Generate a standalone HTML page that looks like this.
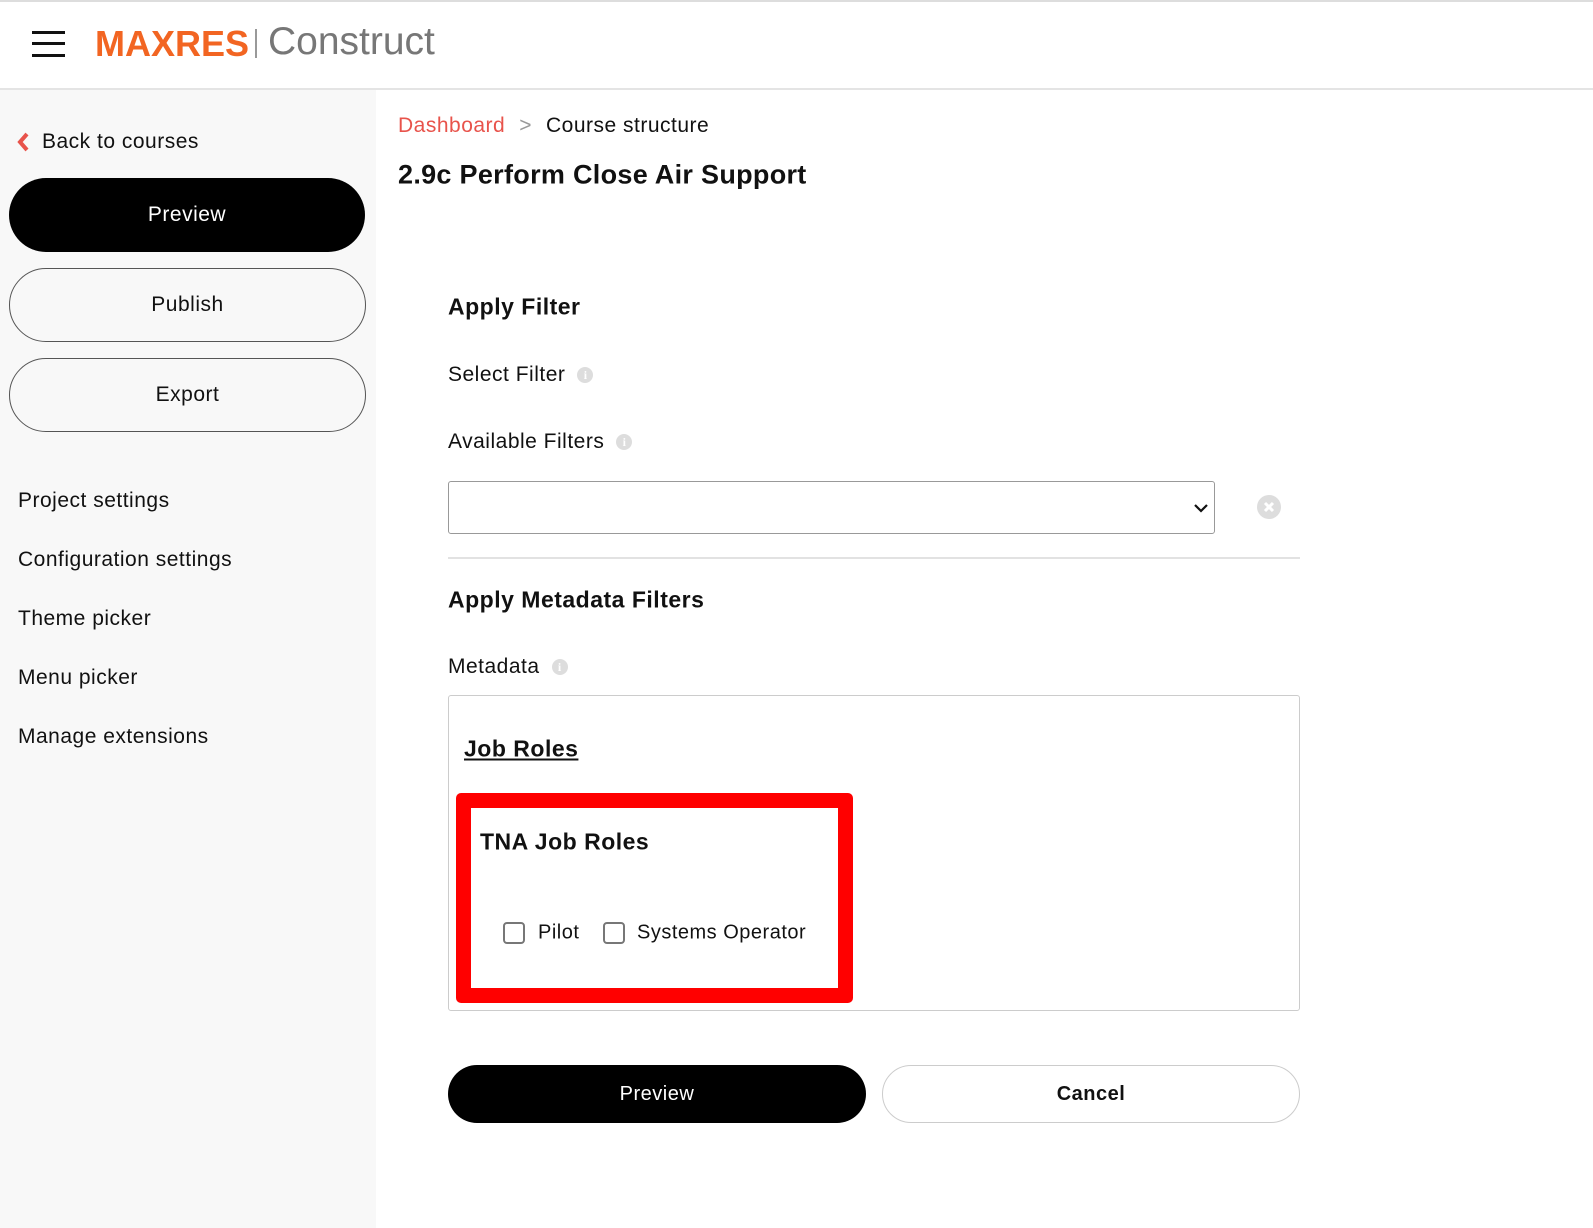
<!DOCTYPE html>
<html><head><style>
*{margin:0;padding:0;box-sizing:border-box}
body{width:1593px;height:1228px;position:relative;background:#fff;font-family:"Liberation Sans",sans-serif;color:#111;overflow:hidden;letter-spacing:0.5px}
.a{position:absolute;white-space:nowrap}
.side{position:absolute;left:0;top:90px;width:376px;height:1138px;background:#f8f8f8}
.btn{position:absolute;border-radius:40px;display:flex;align-items:center;justify-content:center;font-size:21px}
.lbl{font-size:21px;transform:translateY(-50%)}
.info{display:inline-block;width:16px;height:16px;border-radius:50%;background:#ddd;color:#fff;font-size:12px;font-weight:bold;text-align:center;line-height:16px;margin-left:12px;vertical-align:2px;font-family:"Liberation Serif",serif;letter-spacing:0}
.cb{position:absolute;width:22px;height:22px;border:2px solid #777;border-radius:4px;background:#fff}
</style></head><body>
<div class="a" style="left:0;top:0;width:1593px;height:2px;background:#ddd"></div>
<div class="a" style="left:0;top:88px;width:1593px;height:2px;background:#e4e4e4"></div>
<div class="a" style="left:32px;top:31px;width:33px;height:3px;background:#111"></div>
<div class="a" style="left:32px;top:42px;width:33px;height:3px;background:#111"></div>
<div class="a" style="left:32px;top:54px;width:33px;height:3px;background:#111"></div>
<div class="a" style="left:95px;top:23px;font-size:36px;font-weight:bold;color:#f26522;letter-spacing:0">MAXRES</div>
<div class="a" style="left:255px;top:29px;width:2px;height:29px;background:#999"></div>
<div class="a" style="left:268px;top:20px;font-size:39px;color:#777;letter-spacing:0">Construct</div>
<div class="side"></div>
<svg class="a" style="left:16px;top:132px" width="14" height="20"><path d="M11 2 L4 10 L11 18" stroke="#e8534b" stroke-width="4" fill="none"/></svg>
<div class="a lbl" style="left:42px;top:142px">Back to courses</div>
<div class="btn" style="left:9px;top:178px;width:356px;height:74px;background:#000;color:#fff">Preview</div>
<div class="btn" style="left:9px;top:268px;width:357px;height:74px;border:1.5px solid #555">Publish</div>
<div class="btn" style="left:9px;top:358px;width:357px;height:74px;border:1.5px solid #555">Export</div>
<div class="a lbl" style="left:18px;top:501px">Project settings</div>
<div class="a lbl" style="left:18px;top:560px">Configuration settings</div>
<div class="a lbl" style="left:18px;top:619px">Theme picker</div>
<div class="a lbl" style="left:18px;top:678px">Menu picker</div>
<div class="a lbl" style="left:18px;top:737px">Manage extensions</div>
<div class="a lbl" style="left:398px;top:126px"><span style="color:#e8534b">Dashboard</span><span style="color:#999;margin:0 14px">&gt;</span>Course structure</div>
<div class="a lbl" style="left:398px;top:175px;font-size:27px;font-weight:bold;letter-spacing:0.3px">2.9c Perform Close Air Support</div>
<div class="a lbl" style="left:448px;top:307px;font-size:23px;font-weight:bold">Apply Filter</div>
<div class="a lbl" style="left:448px;top:375px">Select Filter<span class="info">i</span></div>
<div class="a lbl" style="left:448px;top:442px">Available Filters<span class="info">i</span></div>
<div class="a" style="left:448px;top:481px;width:767px;height:53px;border:1.5px solid #999;border-radius:3px"></div>
<svg class="a" style="left:1193px;top:502px" width="16" height="12"><path d="M2 3 L8 9 L14 3" stroke="#111" stroke-width="2.2" fill="none"/></svg>
<svg class="a" style="left:1257px;top:495px" width="24" height="24"><circle cx="12" cy="12" r="12" fill="#ddd"/><path d="M8 8 L16 16 M16 8 L8 16" stroke="#fff" stroke-width="3"/></svg>
<div class="a" style="left:448px;top:557px;width:852px;height:2px;background:#e2e2e2"></div>
<div class="a lbl" style="left:448px;top:600px;font-size:23px;font-weight:bold">Apply Metadata Filters</div>
<div class="a lbl" style="left:448px;top:667px">Metadata<span class="info">i</span></div>
<div class="a" style="left:448px;top:695px;width:852px;height:316px;border:1.5px solid #ccc;border-radius:3px"></div>
<div class="a lbl" style="left:464px;top:749px;font-size:23px;font-weight:bold;text-decoration:underline">Job Roles</div>
<div class="a" style="left:456px;top:793px;width:397px;height:210px;border:15px solid #f00;border-radius:5px"></div>
<div class="a lbl" style="left:480px;top:842px;font-size:23px;font-weight:bold">TNA Job Roles</div>
<div class="cb" style="left:503px;top:922px"></div>
<div class="a lbl" style="left:538px;top:933px;font-size:20px">Pilot</div>
<div class="cb" style="left:603px;top:922px"></div>
<div class="a lbl" style="left:637px;top:933px;font-size:20px">Systems Operator</div>
<div class="btn" style="left:448px;top:1065px;width:418px;height:58px;background:#000;color:#fff;font-size:20px">Preview</div>
<div class="btn" style="left:882px;top:1065px;width:418px;height:58px;border:1.5px solid #ccc;font-size:20px;font-weight:bold">Cancel</div>
</body></html>
